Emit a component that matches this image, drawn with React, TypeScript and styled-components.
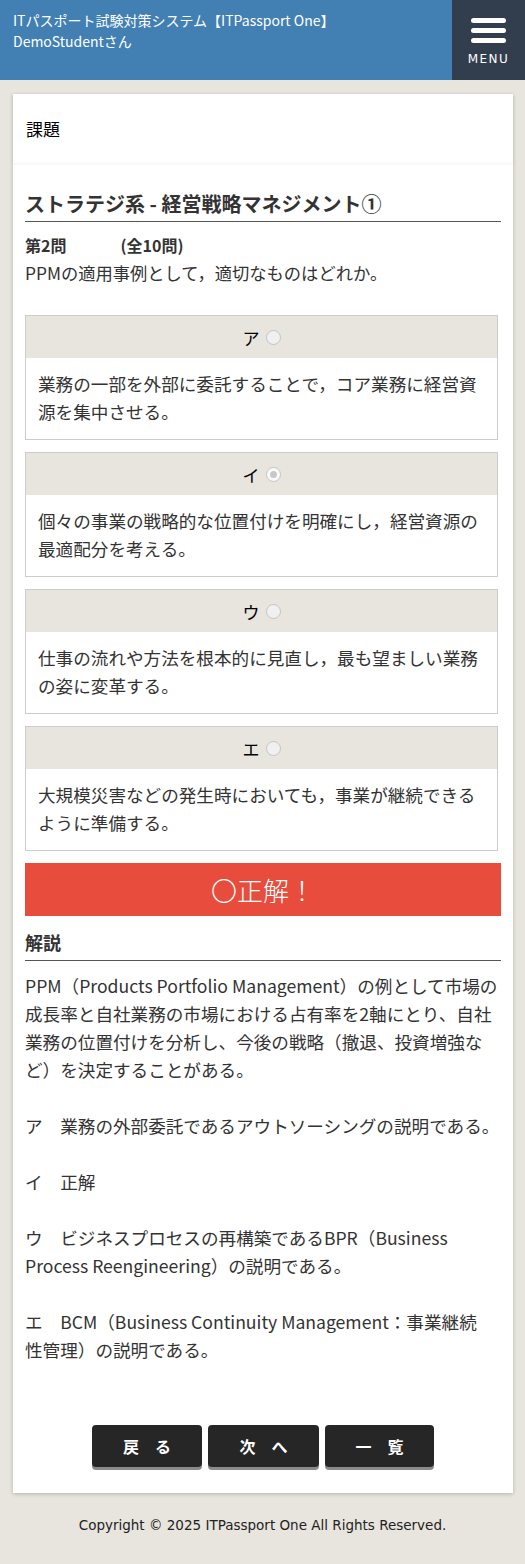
import React from 'react'
import styled, { createGlobalStyle } from 'styled-components'

const GlobalStyle = createGlobalStyle`
  html, body {
    margin: 0;
    padding: 0;
    background: #e8e4de;
    font-family: "Noto Sans CJK JP", "Noto Sans", sans-serif;
    color: #333;
  }
  * { box-sizing: border-box; }
`;

const Header = styled.header`
  display: flex;
  height: 80px;
  background: #4280b4;
`;

const HeaderText = styled.div`
  flex: 1;
  padding: 10px 13px;
  color: #fff;
  font-size: 14px;
  line-height: 21px;
`;

const MenuButton = styled.div`
  width: 73px;
  background: #323e4e;
  display: flex;
  flex-direction: column;
  align-items: center;
  padding-top: 18px;
  color: #fff;
`;

const MenuBar = styled.span`
  display: block;
  width: 35px;
  height: 5px;
  border-radius: 3px;
  background: #fff;
  margin-bottom: 5px;
`;

const MenuLabel = styled.span`
  font-family: "DejaVu Sans", sans-serif;
  font-size: 12px;
  letter-spacing: 1.5px;
  margin-top: 4px;
`;

const Card = styled.main`
  margin: 14px 12px 0 13px;
  background: #fff;
  box-shadow: 0 1px 4px rgba(0, 0, 0, 0.22);
`;

const CardHead = styled.div`
  height: 69px;
  display: flex;
  align-items: center;
  padding: 0 13px;
  font-size: 17px;
  color: #000;
  box-shadow: 0 1px 2px rgba(0, 0, 0, 0.06);
`;

const CardBody = styled.div`
  padding: 26px 12px 26px 12px;
`;

const SectionTitle = styled.h2`
  margin: 0;
  font-size: 20px;
  line-height: 30px;
  font-weight: bold;
  color: #333;
  padding-bottom: 2px;
  border-bottom: 1px solid #555;
`;

const QuestionNo = styled.div`
  margin-top: 11px;
  font-size: 16px;
  line-height: 24px;
  font-weight: bold;
`;

const Total = styled.span`
  margin-left: 54px;
`;

const QuestionText = styled.p`
  margin: 2px 0 28px;
  font-size: 17.3px;
  line-height: 28px;
`;

const Option = styled.div`
  border: 1px solid #ccc;
  margin: 0 3px 12px 0;
`;

const OptionHead = styled.div`
  height: 42px;
  background: #e8e4de;
  display: flex;
  align-items: center;
  justify-content: center;
  font-size: 17px;
  color: #000;
  gap: 6px;
`;

const Radio = styled.span<{ $checked?: boolean }>`
  flex-shrink: 0;
  display: inline-block;
  width: 15px;
  height: 15px;
  border-radius: 50%;
  border: 1px solid #c4c4c4;
  background: ${p => (p.$checked ? '#fafafa' : '#f0f0f0')};
  position: relative;
  &::after {
    content: '';
    display: ${p => (p.$checked ? 'block' : 'none')};
    position: absolute;
    left: 3px;
    top: 3px;
    width: 7px;
    height: 7px;
    border-radius: 50%;
    background: #c8c8c8;
  }
`;

const OptionBody = styled.div`
  padding: 12px 12px 13px;
  font-size: 17.6px;
  line-height: 28px;
`;

const Result = styled.div`
  height: 53px;
  background: #e74c3c;
  color: #fff;
  font-size: 26px;
  display: flex;
  align-items: center;
  justify-content: center;
  font-family: "Liberation Serif", "Noto Sans CJK JP", serif;
  font-weight: 300;
`;

const ExplainTitle = styled.h3`
  margin: 12px 0 0;
  font-size: 18px;
  line-height: 28px;
  font-weight: bold;
  padding-bottom: 4px;
  border-bottom: 1px solid #555;
`;

const ExplainText = styled.div`
  margin-top: 11px;
  font-size: 17.6px;
  line-height: 28px;
  white-space: pre-line;
`;

const ButtonRow = styled.div`
  display: flex;
  justify-content: center;
  gap: 6px;
  margin-top: 61px;
`;

const NavButton = styled.button<{ $width?: number }>`
  width: ${p => p.$width || 110}px;
  height: 42px;
  border: none;
  border-radius: 4px;
  background: #262626;
  color: #fff;
  font-family: "Noto Sans CJK JP", sans-serif;
  font-size: 16px;
  font-weight: bold;
  box-shadow: 0 3px 0 #8a8a8a;
  cursor: pointer;
`;

const Footer = styled.footer`
  padding: 24px 0 30px;
  text-align: center;
  font-size: 13.5px;
  color: #222;
  font-family: "DejaVu Sans", "Noto Sans CJK JP", sans-serif;
`;

const options = [
  { label: 'ア', text: '業務の一部を外部に委託することで，コア業務に経営資源を集中させる。' },
  { label: 'イ', text: '個々の事業の戦略的な位置付けを明確にし，経営資源の最適配分を考える。', checked: true },
  { label: 'ウ', text: '仕事の流れや方法を根本的に見直し，最も望ましい業務の姿に変革する。' },
  { label: 'エ', text: '大規模災害などの発生時においても，事業が継続できるように準備する。' },
]

const explanation = `PPM（Products Portfolio Management）の例として市場の成長率と自社業務の市場における占有率を2軸にとり、自社業務の位置付けを分析し、今後の戦略（撤退、投資増強など）を決定することがある。

ア　業務の外部委託であるアウトソーシングの説明である。

イ　正解

ウ　ビジネスプロセスの再構築であるBPR（Business Process Reengineering）の説明である。

エ　BCM（Business Continuity Management：事業継続
性管理）の説明である。`

const App = () => {
  return (
    <>
      <GlobalStyle />
      <Header>
        <HeaderText>
          ITパスポート試験対策システム【ITPassport One】<br />
          DemoStudentさん
        </HeaderText>
        <MenuButton>
          <MenuBar />
          <MenuBar />
          <MenuBar />
          <MenuLabel>MENU</MenuLabel>
        </MenuButton>
      </Header>

      <Card>
        <CardHead>課題</CardHead>
        <CardBody>
          <SectionTitle>ストラテジ系 - 経営戦略マネジメント①</SectionTitle>
          <QuestionNo>
            第2問<Total>(全10問)</Total>
          </QuestionNo>
          <QuestionText>PPMの適用事例として，適切なものはどれか。</QuestionText>

          {options.map(o => (
            <Option key={o.label}>
              <OptionHead>
                {o.label}
                <Radio $checked={o.checked} />
              </OptionHead>
              <OptionBody>{o.text}</OptionBody>
            </Option>
          ))}

          <Result>〇正解！</Result>

          <ExplainTitle>解説</ExplainTitle>
          <ExplainText>{explanation}</ExplainText>

          <ButtonRow>
            <NavButton $width={110}>戻　る</NavButton>
            <NavButton $width={111}>次　へ</NavButton>
            <NavButton $width={109}>一　覧</NavButton>
          </ButtonRow>
        </CardBody>
      </Card>

      <Footer>Copyright © 2025 ITPassport One All Rights Reserved.</Footer>
    </>
  )
}

export default App
